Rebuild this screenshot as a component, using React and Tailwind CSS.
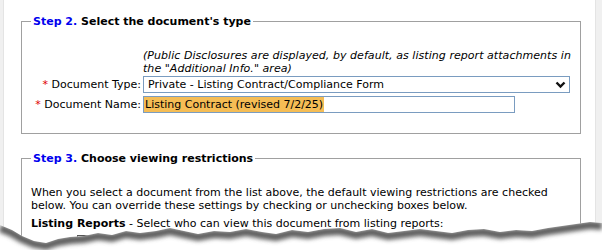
import React from "react";

function Chevron() {
  return (
    <svg width="11" height="8" viewBox="0 0 11 8" className="shrink-0">
      <path d="M1.5 1.5 L5.5 5.5 L9.5 1.5" fill="none" stroke="#111" strokeWidth="2.4" />
    </svg>
  );
}

function TornEdge() {
  const pts =
    "0,225 12,230 22,236 34,241 46,243 58,239 70,237 84,236 98,233 112,235 126,231 140,233 156,231 170,228 184,231 198,234 214,231 230,232 246,229 262,232 276,234 292,230 308,232 324,229 340,228 356,232 372,229 388,233 404,231 420,229 436,231 452,233 468,230 484,229 500,232 516,230 532,231 548,228 562,226 576,224 590,222 602,223";
  const poly = pts + " 602,250 0,250";
  return (
    <svg className="absolute left-0 bottom-0" width="602" height="40" viewBox="0 210 602 40">
      <defs>
        <filter id="blur" x="-5%" y="-50%" width="110%" height="200%">
          <feGaussianBlur stdDeviation="2.2" />
        </filter>
        <clipPath id="below">
          <polygon points={poly} />
        </clipPath>
      </defs>
      <polygon points={poly} fill="#ffffff" />
      <g clipPath="url(#below)">
        <polyline points={pts} fill="none" stroke="#5f5f5f" strokeWidth="8" filter="url(#blur)" transform="translate(0,3)" />
      </g>
    </svg>
  );
}

export default function App() {
  return (
    <div className="relative w-[602px] h-[250px] overflow-hidden bg-white flex text-black" style={{ fontFamily: '"DejaVu Sans", Verdana, sans-serif' }}>
      <div className="w-[4px] shrink-0 bg-[#f0f0f0] border-r border-[#e4e4e4]" />
      <div className="flex-1 min-w-0 pt-[14px] pl-[17px]">
        <fieldset className="w-[560px] min-w-0 h-[120px] border border-[#a0a0a0] px-[9px]">
          <legend className="px-[2px] text-[11px] font-bold leading-[15px]">
            <span className="text-[#0000ee]">Step 2.</span> Select the document's type
          </legend>
          <div className="grid grid-cols-[110px_1fr] gap-x-[2px] mt-[20px] text-[11px]">
            <div />
            <p className="italic text-[11px] tracking-[0.05px] leading-[13px] whitespace-nowrap">
              (Public Disclosures are displayed, by default, as listing report attachments in
              <br />
              the "Additional Info." area)
            </p>
            <label className="text-right leading-[17px] mt-[1px] whitespace-nowrap">
              <span className="text-[#e00000]">*</span> Document Type:
            </label>
            <div className="mt-[1px] w-[427px] h-[17px] border border-[#7a9cc0] flex items-center justify-between pl-[4px] pr-[3px] leading-[15px]">
              <span>Private - Listing Contract/Compliance Form</span>
              <Chevron />
            </div>
            <label className="text-right leading-[17px] mt-[3px] whitespace-nowrap">
              <span className="text-[#e00000]">*</span> Document Name:
            </label>
            <div className="mt-[3px] w-[372px] h-[17px] border border-[#7a9cc0] flex items-stretch leading-[15px]">
              <span className="bg-[#f5bd55] pl-[1px] pr-[1px]">Listing Contract (revised 7/2/25)</span>
            </div>
          </div>
        </fieldset>
        <fieldset className="mt-[17px] w-[560px] min-w-0 h-[120px] border border-[#a0a0a0] px-[9px]">
          <legend className="px-[2px] text-[11px] font-bold leading-[15px]">
            <span className="text-[#0000ee]">Step 3.</span> Choose viewing restrictions
          </legend>
          <p className="mt-[20px] text-[11px] leading-[13px]">
            When you select a document from the list above, the default viewing restrictions are checked below. You can override these settings by checking or unchecking boxes below.
          </p>
          <p className="mt-[5px] text-[11px] leading-[13px]">
            <span className="font-bold">Listing Reports</span> - Select who can view this document from listing reports:
          </p>
          <div className="mt-[3px] ml-[46px] flex items-center gap-1 text-[11px]">
            <span className="w-[13px] h-[13px] border border-[#555] bg-white" />
            <span>Public</span>
          </div>
        </fieldset>
      </div>
      <div className="w-[7px] shrink-0 bg-[#f0f0f0] border-l border-[#e4e4e4]" />
      <TornEdge />
    </div>
  );
}
